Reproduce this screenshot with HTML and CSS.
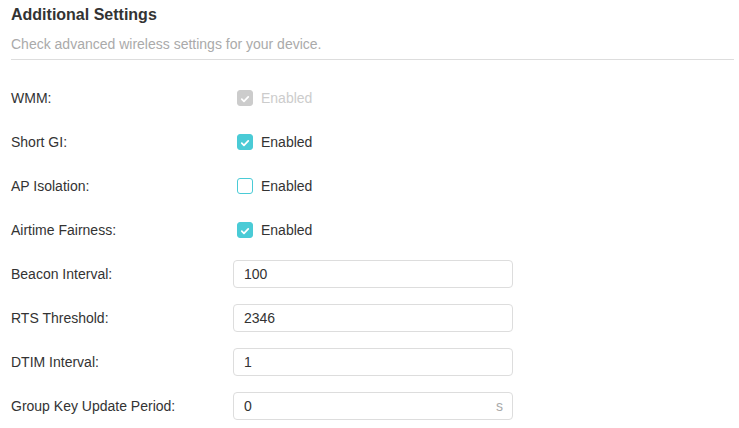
FILE: index.html
```html
<!DOCTYPE html>
<html lang="en">
<head>
    <meta charset="UTF-8">
    <meta name="viewport" content="width=device-width, initial-scale=1.0">
    <title>Additional Settings</title>
    <link rel="stylesheet" href="styles.css">
</head>
<body>
    <div id="root">
        <div class="header">
            <h2 class="title">Additional Settings</h2>
            <p class="subtitle">Check advanced wireless settings for your device.</p>
        </div>

        <div class="row">
            <div class="label">WMM:</div>
            <label class="check disabled">
                <span class="box checked">
                    <svg viewBox="0 0 16 16" width="16" height="16"><path d="M4.3 8.2l2.5 2.4 4.9-5" fill="none" stroke="#fff" stroke-width="2" stroke-linecap="round" stroke-linejoin="round"/></svg>
                </span>
                Enabled
            </label>
        </div>
        <div class="row">
            <div class="label">Short GI:</div>
            <label class="check">
                <span class="box checked">
                    <svg viewBox="0 0 16 16" width="16" height="16"><path d="M4.3 8.2l2.5 2.4 4.9-5" fill="none" stroke="#fff" stroke-width="2" stroke-linecap="round" stroke-linejoin="round"/></svg>
                </span>
                Enabled
            </label>
        </div>
        <div class="row">
            <div class="label">AP Isolation:</div>
            <label class="check">
                <span class="box"></span>
                Enabled
            </label>
        </div>
        <div class="row">
            <div class="label">Airtime Fairness:</div>
            <label class="check">
                <span class="box checked">
                    <svg viewBox="0 0 16 16" width="16" height="16"><path d="M4.3 8.2l2.5 2.4 4.9-5" fill="none" stroke="#fff" stroke-width="2" stroke-linecap="round" stroke-linejoin="round"/></svg>
                </span>
                Enabled
            </label>
        </div>
        <div class="row">
            <div class="label">Beacon Interval:</div>
            <div class="text-field"><input type="text" value="100"></div>
        </div>
        <div class="row">
            <div class="label">RTS Threshold:</div>
            <div class="text-field"><input type="text" value="2346"></div>
        </div>
        <div class="row">
            <div class="label">DTIM Interval:</div>
            <div class="text-field"><input type="text" value="1"></div>
        </div>
        <div class="row">
            <div class="label">Group Key Update Period:</div>
            <div class="text-field"><input type="text" value="0"><span class="unit">s</span></div>
        </div>
    </div>
</body>
</html>
```

FILE: styles.css
```css
body {
    margin: 0;
    padding: 0;
    font-family: Arial, "Liberation Sans", sans-serif;
    font-size: 14px;
    color: #333;
    background-color: #fff;
}
#root {
    padding: 0 5px 0 11px;
}
.header {
    border-bottom: 1px solid #ddd;
    padding-bottom: 6px;
    margin-bottom: 16px;
}
.title {
    margin: 0;
    padding-top: 6px;
    font-size: 16px;
    font-weight: bold;
    line-height: 18px;
    color: #333;
}
.subtitle {
    margin: 12px 0 0;
    font-size: 14px;
    line-height: 17px;
    color: #aaa;
}
.row {
    display: flex;
    align-items: center;
    height: 44px;
}
.label {
    width: 222px;
    flex-shrink: 0;
}
.check {
    display: flex;
    align-items: center;
    gap: 8px;
    margin-left: 4px;
    cursor: pointer;
}
.box {
    box-sizing: border-box;
    width: 16px;
    height: 16px;
    border: 1px solid #4acbd6;
    border-radius: 3px;
    background: #fff;
    display: flex;
}
.box.checked {
    background: #4acbd6;
}
.check.disabled {
    color: #ccc;
    cursor: default;
}
.check.disabled .box {
    background: #ccc;
    border-color: #ccc;
}
.text-field {
    position: relative;
    width: 280px;
}
.text-field input {
    box-sizing: border-box;
    width: 100%;
    height: 28px;
    padding: 0 10px;
    border: 1px solid #ddd;
    border-radius: 4px;
    font-family: Arial, "Liberation Sans", sans-serif;
    font-size: 14px;
    color: #333;
    outline: none;
}
.unit {
    position: absolute;
    right: 10px;
    top: 6px;
    color: #aaa;
}
```
